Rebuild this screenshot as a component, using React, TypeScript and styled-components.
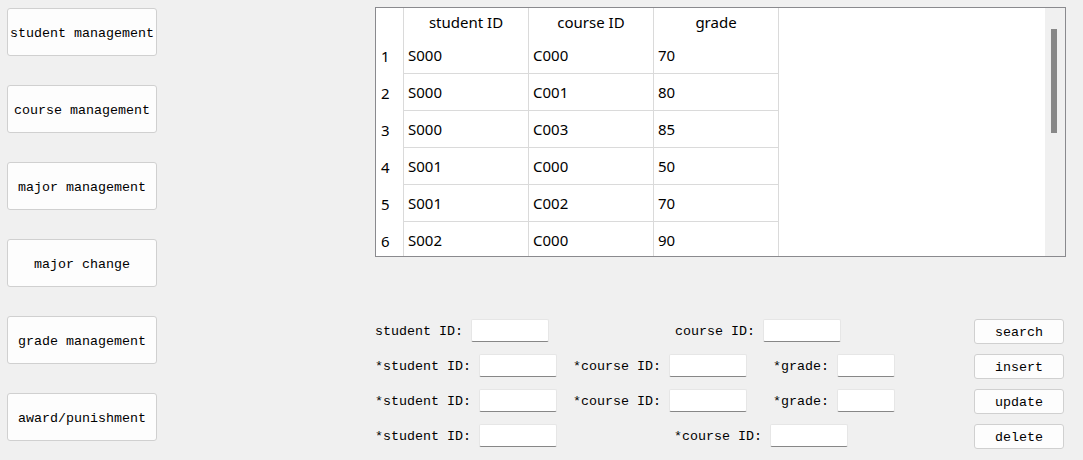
import React from "react";
import styled, { createGlobalStyle } from "styled-components";

const GlobalStyle = createGlobalStyle`
  html, body {
    margin: 0;
    padding: 0;
    background: #f0f0f0;
  }
  * {
    box-sizing: border-box;
  }
`;

const Window = styled.div`
  display: flex;
  width: 1083px;
  height: 460px;
  overflow: hidden;
  background: #f0f0f0;
  font-family: "Liberation Mono", "DejaVu Sans Mono", monospace;
  font-size: 13.33px;
  color: #000;
`;

const SideBar = styled.div`
  width: 375px;
  flex-shrink: 0;
  padding: 8px 0 0 7px;
  display: flex;
  flex-direction: column;
  gap: 29px;
`;

const NavButton = styled.button`
  width: 150px;
  height: 48px;
  background: #fdfdfd;
  border: 1px solid #d0d0d0;
  border-radius: 3px;
  font-family: inherit;
  font-size: inherit;
  color: #000;
  padding: 3px 0 0;
`;

const Main = styled.div`
  display: flex;
  flex-direction: column;
  padding-top: 7px;
`;

const TableBox = styled.div`
  display: flex;
  width: 691px;
  height: 250px;
  border: 1px solid #8a8a8e;
  background: #fff;
`;

const TableView = styled.div`
  flex: 1;
  overflow: hidden;
  display: grid;
  grid-template-columns: 28px 125px 125px 125px;
  grid-auto-rows: 37px;
  grid-template-rows: 29px;
  align-content: start;
  font-family: "Noto Sans", "Open Sans", sans-serif;
  font-size: 15px;
`;

const HeaderCell = styled.div`
  border-right: 1px solid #dadada;
  display: flex;
  align-items: center;
  justify-content: center;
  padding-bottom: 2px;
`;

const RowHead = styled.div`
  border-right: 1px solid #dadada;
  display: flex;
  align-items: center;
  padding-left: 5px;
  padding-top: 1px;
`;

const Cell = styled.div`
  border-right: 1px solid #dadada;
  border-bottom: 1px solid #dadada;
  display: flex;
  align-items: center;
  padding-left: 4px;
`;

const ScrollTrack = styled.div`
  width: 20px;
  flex-shrink: 0;
  background: #f0f0f0;
  padding: 21px 0 0 6px;
`;

const ScrollThumb = styled.div`
  width: 6px;
  height: 104px;
  background: #888888;
`;

const FormArea = styled.div`
  display: flex;
  margin-top: 62px;
`;

const FieldGrid = styled.div`
  width: 600px;
  display: flex;
  flex-direction: column;
  gap: 12px;
`;

const FieldRow = styled.div<{ $cols: string }>`
  display: grid;
  grid-template-columns: ${(p) => p.$cols};
  height: 23px;
`;

const Field = styled.label`
  display: flex;
  align-items: center;
  gap: 8px;
  white-space: pre;
  padding-top: 2px;
`;

const TextBox = styled.input<{ $w?: number }>`
  width: ${(p) => p.$w ?? 78}px;
  height: 23px;
  margin-top: -2px;
  background: #fff;
  border: 1px solid #e6e6e6;
  border-bottom: 1px solid #878787;
  border-radius: 2px;
  padding: 0 3px;
  font-family: inherit;
  outline: none;
`;

const ActionColumn = styled.div`
  display: flex;
  flex-direction: column;
  gap: 10px;
  margin-left: -1px;
`;

const ActionButton = styled.button`
  width: 90px;
  height: 25px;
  background: #fdfdfd;
  border: 1px solid #d0d0d0;
  border-radius: 3px;
  font-family: inherit;
  font-size: inherit;
  color: #000;
  padding: 2px 0 0;
`;

const navItems = [
  "student management",
  "course management",
  "major management",
  "major change",
  "grade management",
  "award/punishment",
];

const rows = [
  ["S000", "C000", "70"],
  ["S000", "C001", "80"],
  ["S000", "C003", "85"],
  ["S001", "C000", "50"],
  ["S001", "C002", "70"],
  ["S002", "C000", "90"],
];

export default function App() {
  return (
    <>
      <GlobalStyle />
      <Window>
        <SideBar>
          {navItems.map((n) => (
            <NavButton key={n}>{n}</NavButton>
          ))}
        </SideBar>
        <Main>
          <TableBox>
            <TableView>
              <HeaderCell />
              <HeaderCell>student ID</HeaderCell>
              <HeaderCell>course ID</HeaderCell>
              <HeaderCell>grade</HeaderCell>
              {rows.map((r, i) => (
                <React.Fragment key={i}>
                  <RowHead>{i + 1}</RowHead>
                  {r.map((v, j) => (
                    <Cell key={j}>{v}</Cell>
                  ))}
                </React.Fragment>
              ))}
            </TableView>
            <ScrollTrack>
              <ScrollThumb />
            </ScrollTrack>
          </TableBox>
          <FormArea>
            <FieldGrid>
              <FieldRow $cols="300px 300px">
                <Field>
                  student ID:
                  <TextBox />
                </Field>
                <Field>
                  course ID:
                  <TextBox />
                </Field>
              </FieldRow>
              <FieldRow $cols="198px 200px 202px">
                <Field>
                  *student ID:
                  <TextBox />
                </Field>
                <Field>
                  *course ID:
                  <TextBox />
                </Field>
                <Field>
                  *grade:
                  <TextBox $w={58} />
                </Field>
              </FieldRow>
              <FieldRow $cols="198px 200px 202px">
                <Field>
                  *student ID:
                  <TextBox />
                </Field>
                <Field>
                  *course ID:
                  <TextBox />
                </Field>
                <Field>
                  *grade:
                  <TextBox $w={58} />
                </Field>
              </FieldRow>
              <FieldRow $cols="299px 301px">
                <Field>
                  *student ID:
                  <TextBox />
                </Field>
                <Field>
                  *course ID:
                  <TextBox />
                </Field>
              </FieldRow>
            </FieldGrid>
            <ActionColumn>
              <ActionButton>search</ActionButton>
              <ActionButton>insert</ActionButton>
              <ActionButton>update</ActionButton>
              <ActionButton>delete</ActionButton>
            </ActionColumn>
          </FormArea>
        </Main>
      </Window>
    </>
  );
}
